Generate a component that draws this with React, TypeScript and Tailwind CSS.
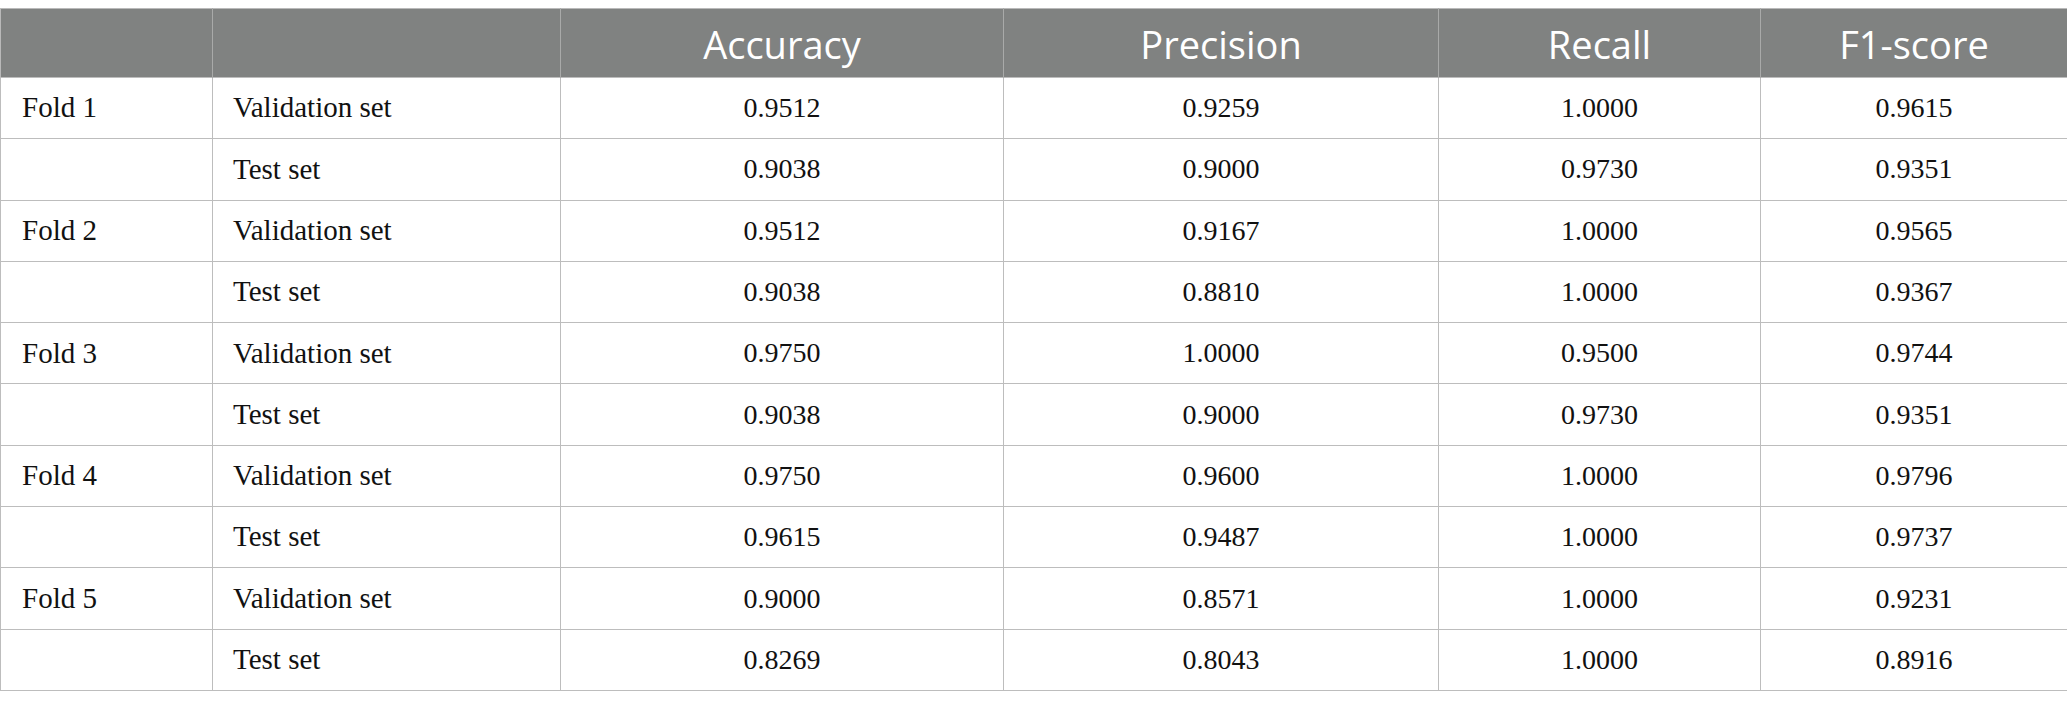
import React from "react";

const rows: [string, string, string, string, string, string][] = [
  ["Fold 1", "Validation set", "0.9512", "0.9259", "1.0000", "0.9615"],
  ["", "Test set", "0.9038", "0.9000", "0.9730", "0.9351"],
  ["Fold 2", "Validation set", "0.9512", "0.9167", "1.0000", "0.9565"],
  ["", "Test set", "0.9038", "0.8810", "1.0000", "0.9367"],
  ["Fold 3", "Validation set", "0.9750", "1.0000", "0.9500", "0.9744"],
  ["", "Test set", "0.9038", "0.9000", "0.9730", "0.9351"],
  ["Fold 4", "Validation set", "0.9750", "0.9600", "1.0000", "0.9796"],
  ["", "Test set", "0.9615", "0.9487", "1.0000", "0.9737"],
  ["Fold 5", "Validation set", "0.9000", "0.8571", "1.0000", "0.9231"],
  ["", "Test set", "0.8269", "0.8043", "1.0000", "0.8916"],
];

const headers = ["Accuracy", "Precision", "Recall", "F1-score"];

export default function App() {
  return (
    <div className="w-[2067px] h-[709px] bg-white pt-[8px]">
      <table
        className="table-fixed border-collapse w-[2067px]"
        style={{ fontFamily: '"Liberation Serif", serif' }}
      >
        <colgroup>
          <col className="w-[212px]" />
          <col className="w-[348px]" />
          <col className="w-[443px]" />
          <col className="w-[435px]" />
          <col className="w-[322px]" />
          <col className="w-[307px]" />
        </colgroup>
        <thead>
          <tr className="h-[69px] bg-[#808281] border border-[#b9b9b9]">
            <th className="border-r border-[#a9aaa9] p-0"></th>
            <th className="border-r border-[#a9aaa9] p-0"></th>
            {headers.map((h, i) => (
              <th
                key={h}
                className={`p-0 pt-[2px] text-center font-normal text-white text-[38px] leading-none ${
                  i < 3 ? "border-r border-[#a9aaa9]" : ""
                }`}
                style={{ fontFamily: '"Open Sans", sans-serif' }}
              >
                {h}
              </th>
            ))}
          </tr>
        </thead>
        <tbody>
          {rows.map((r, ri) => (
            <tr key={ri} className="h-[61.3px]">
              <td className="border border-[#bdbdbd] pl-[21px] text-left text-[29px] text-[#111] p-0">
                {r[0]}
              </td>
              <td className="border border-[#bdbdbd] pl-[20px] text-left text-[29px] text-[#111] p-0">
                {r[1]}
              </td>
              {r.slice(2).map((v, vi) => (
                <td
                  key={vi}
                  className="border border-[#bdbdbd] text-center text-[28px] text-[#111] p-0"
                >
                  {v}
                </td>
              ))}
            </tr>
          ))}
        </tbody>
      </table>
    </div>
  );
}
